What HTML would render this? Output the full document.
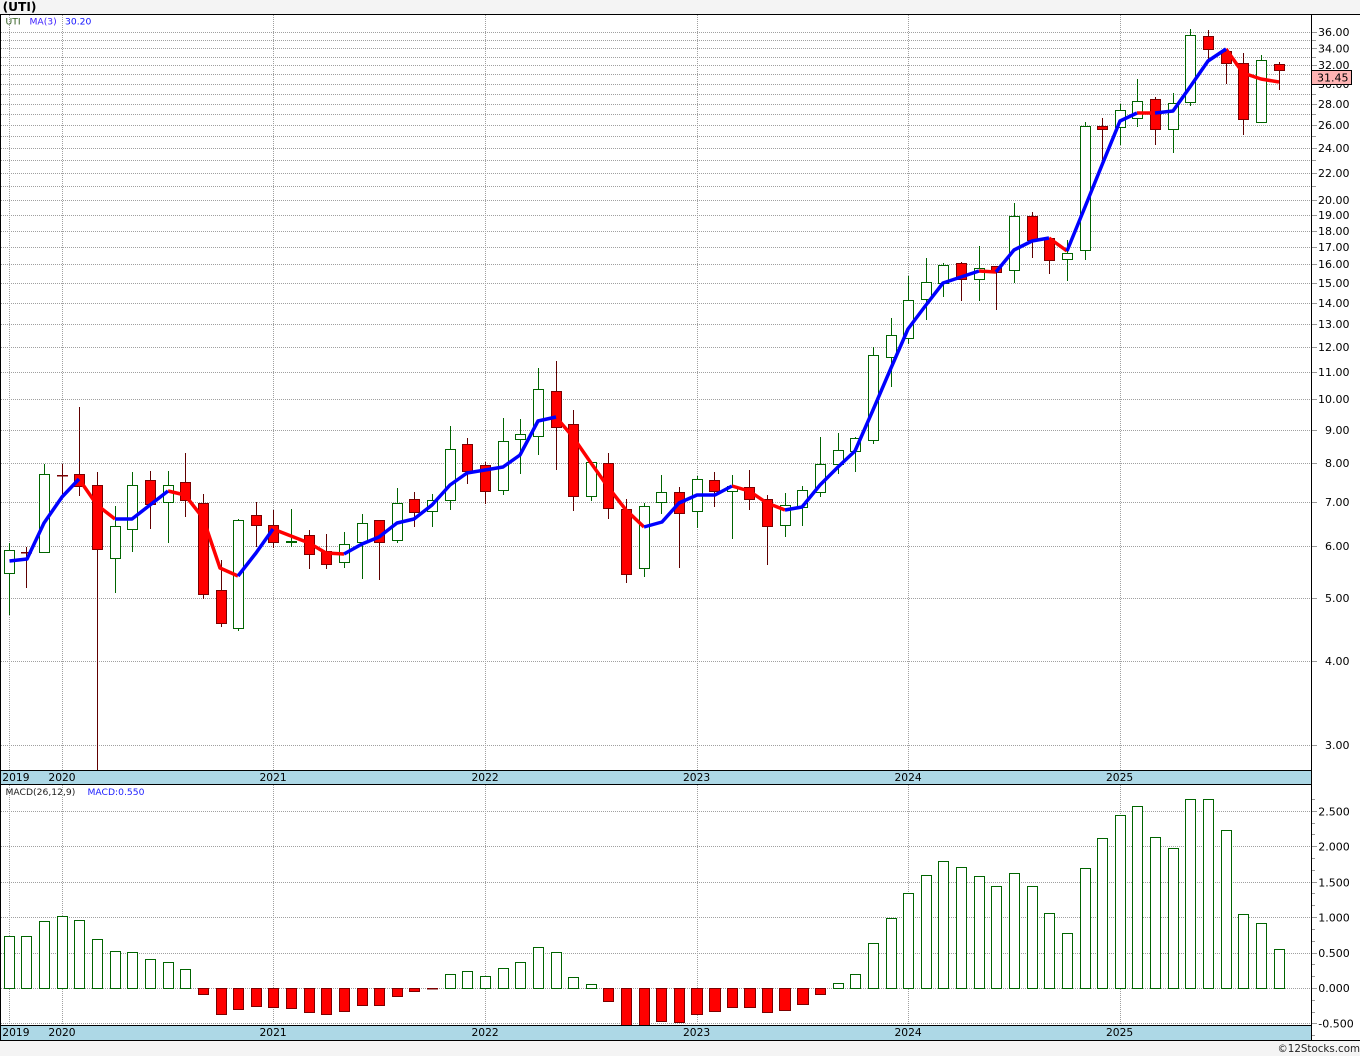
<!DOCTYPE html>
<html><head><meta charset="utf-8"><title>(UTI)</title>
<style>
html,body{margin:0;padding:0;background:#f4f4f4;width:1360px;height:1056px;overflow:hidden}
svg{position:absolute;left:0;top:0;display:block}
text{font-family:"DejaVu Sans","Liberation Sans",sans-serif;fill:#000}
.ax text{font-size:11px}
.d text{font-size:10.7px}
.leg{font-size:9.2px}
</style></head><body>
<svg width="1360" height="1056" viewBox="0 0 1360 1056" xmlns="http://www.w3.org/2000/svg">
<rect x="0" y="0" width="1360" height="1056" fill="#f4f4f4"/>
<rect x="0" y="14" width="1360" height="1026" fill="#fff"/>
<text x="2.6" y="11" style="font-size:12.2px;font-weight:bold;fill:#000">(UTI)</text>

<!-- grid -->
<g fill="none" stroke="#a0a0a0" stroke-width="1" stroke-dasharray="1 1" shape-rendering="crispEdges">
<path d="M1 32.5H1311M1 40.5H1311M1 48.5H1311M1 57.5H1311M1 65.5H1311M1 74.5H1311M1 84.5H1311M1 94.5H1311M1 104.5H1311M1 114.5H1311M1 125.5H1311M1 136.5H1311M1 148.5H1311M1 160.5H1311M1 173.5H1311M1 186.5H1311M1 200.5H1311M1 215.5H1311M1 231.5H1311M1 247.5H1311M1 264.5H1311M1 283.5H1311M1 303.5H1311M1 324.5H1311M1 347.5H1311M1 372.5H1311M1 399.5H1311M1 430.5H1311M1 463.5H1311M1 502.5H1311M1 546.5H1311M1 598.5H1311M1 661.5H1311M1 745.5H1311"/>
<path d="M1 811.5H1311M1 846.5H1311M1 882.5H1311M1 917.5H1311M1 953.5H1311M1 988.5H1311M1 1023.5H1311"/>
<path d="M9.5 15V770M62.5 15V770M273.5 15V770M485.5 15V770M697.5 15V770M908.5 15V770M1120.5 15V770"/>
<path d="M9.5 785V1025M62.5 785V1025M273.5 785V1025M485.5 785V1025M697.5 785V1025M908.5 785V1025M1120.5 785V1025"/>
</g>

<!-- wicks -->
<path fill="none" stroke="#006400" stroke-width="1" shape-rendering="crispEdges" d="M9.5 543V615M44.5 464V552M115.5 506V593M132.5 472V552M168.5 471V543M238.5 519V631M291.5 509V547M344.5 532V568M362.5 514V579M397.5 488V543M432.5 494V527M450.5 426V510M503.5 418V495M520.5 419V474M538.5 368V455M591.5 462V501M644.5 503V577M661.5 475V514M697.5 476V528M732.5 475V539M785.5 493V537M802.5 486V526M820.5 437V497M838.5 433V474M855.5 437V472M873.5 347V444M891.5 318V387M908.5 276V344M926.5 258V320M943.5 263V297M979.5 246V301M1014.5 203V283M1067.5 240V281M1085.5 122V260M1120.5 104V145M1137.5 79V127M1173.5 93V153M1190.5 29V106M1261.5 55V122"/>
<path fill="none" stroke="#600000" stroke-width="1" shape-rendering="crispEdges" d="M26.5 547V588M62.5 464V498M79.5 407V496M97.5 472V770M150.5 471V529M185.5 453V517M203.5 494V599M221.5 560V627M256.5 502V547M273.5 510V548M309.5 530V569M326.5 534V569M379.5 520V580M414.5 492V527M467.5 438V484M485.5 462V504M556.5 361V470M573.5 410V511M608.5 453V519M626.5 499V583M679.5 487V568M714.5 472V507M749.5 470V510M767.5 495V565M961.5 262V301M996.5 266V310M1032.5 212V258M1049.5 238V274M1102.5 118V165M1155.5 97V145M1208.5 30V62M1226.5 51V84M1243.5 53V135M1279.5 62V90"/>

<!-- bodies -->
<path fill="#fff" stroke="#006400" stroke-width="1" shape-rendering="crispEdges" d="M4.5 550.5h10V573.5h-10zM39.5 474.5h10V552.5h-10zM110.5 526.5h10V558.5h-10zM127.5 485.5h10V529.5h-10zM163.5 485.5h10V502.5h-10zM233.5 520.5h10V628.5h-10zM286.5 541.5h10v1h-10zM339.5 544.5h10V562.5h-10zM357.5 523.5h10V542.5h-10zM392.5 503.5h10V540.5h-10zM427.5 500.5h10V511.5h-10zM445.5 449.5h10V500.5h-10zM498.5 441.5h10V490.5h-10zM515.5 434.5h10V439.5h-10zM533.5 389.5h10V436.5h-10zM586.5 462.5h10V496.5h-10zM639.5 506.5h10V568.5h-10zM656.5 492.5h10V502.5h-10zM692.5 479.5h10V511.5h-10zM727.5 486.5h10V491.5h-10zM780.5 505.5h10V525.5h-10zM797.5 490.5h10V507.5h-10zM815.5 464.5h10V492.5h-10zM833.5 450.5h10V464.5h-10zM850.5 438.5h10V451.5h-10zM868.5 355.5h10V440.5h-10zM886.5 335.5h10V357.5h-10zM903.5 300.5h10V338.5h-10zM921.5 282.5h10V299.5h-10zM938.5 265.5h10V283.5h-10zM974.5 268.5h10V279.5h-10zM1009.5 216.5h10V270.5h-10zM1062.5 253.5h10V259.5h-10zM1080.5 126.5h10V250.5h-10zM1115.5 110.5h10V127.5h-10zM1132.5 101.5h10V118.5h-10zM1168.5 103.5h10V129.5h-10zM1185.5 35.5h10V102.5h-10zM1256.5 60.5h10V122.5h-10z"/>
<path fill="#f00" stroke="#7a0000" stroke-width="1" shape-rendering="crispEdges" d="M21.5 552.5h10v.5h-10zM57.5 475.5h10v.5h-10zM74.5 474.5h10V486.5h-10zM92.5 485.5h10V549.5h-10zM145.5 480.5h10V504.5h-10zM180.5 482.5h10V500.5h-10zM198.5 503.5h10V594.5h-10zM216.5 590.5h10V623.5h-10zM251.5 515.5h10V525.5h-10zM268.5 525.5h10V542.5h-10zM304.5 535.5h10V554.5h-10zM321.5 551.5h10V564.5h-10zM374.5 520.5h10V542.5h-10zM409.5 499.5h10V512.5h-10zM462.5 444.5h10V471.5h-10zM480.5 465.5h10V491.5h-10zM551.5 391.5h10V427.5h-10zM568.5 424.5h10V496.5h-10zM603.5 463.5h10V508.5h-10zM621.5 509.5h10V574.5h-10zM674.5 492.5h10V513.5h-10zM709.5 480.5h10V491.5h-10zM744.5 487.5h10V499.5h-10zM762.5 499.5h10V526.5h-10zM956.5 263.5h10V279.5h-10zM991.5 266.5h10V272.5h-10zM1027.5 216.5h10V240.5h-10zM1044.5 238.5h10V260.5h-10zM1097.5 126.5h10V129.5h-10zM1150.5 99.5h10V129.5h-10zM1203.5 36.5h10V49.5h-10zM1221.5 51.5h10V63.5h-10zM1238.5 63.5h10V119.5h-10zM1274.5 64.5h10V70.5h-10z"/>

<!-- MA line -->
<g fill="none" stroke-width="3.5" stroke-linejoin="round" stroke-linecap="butt">
<g stroke="#f00">
<polyline points="79,479 97,505 115,519"/>
<polyline points="168,491 185,495 203,518 220,568 238,576"/>
<polyline points="273,529 291,536 309,543 326,553 344,554"/>
<polyline points="556,417 573,437 591,463 608,487 626,510 644,527"/>
<polyline points="732,486 749,491 767,503 785,510"/>
<polyline points="979,271 996,272"/>
<polyline points="1049,238 1067,251"/>
<polyline points="1137,113 1155,113"/>
<polyline points="1226,49 1243,73 1261,79 1279,82"/>
</g>
<g stroke="#00f">
<polyline points="9.5,561 27,559 44,523 62,497 79,479"/>
<polyline points="115,519 132,519 150,505 168,491"/>
<polyline points="238,576 256,553 273,529"/>
<polyline points="344,554 362,544 379,537 397,523 414,519 432,505 450,485 467,473 485,470 503,467 520,455 538,421 556,417"/>
<polyline points="644,527 662,522 679,503 697,495 715,495 732,486"/>
<polyline points="785,510 802,507 820,485 838,467 855,451 873,410 891,368 908,329 926,305 943,283 961,277 979,271"/>
<polyline points="996,272 1014,250 1032,241 1049,238"/>
<polyline points="1067,251 1085,207 1102,165 1120,121 1137,113"/>
<polyline points="1155,113 1173,111 1190,87 1208,61 1226,49"/>
</g>
</g>

<!-- MACD -->
<path fill="#fff" stroke="#006400" stroke-width="1" shape-rendering="crispEdges" d="M4.5 936.5h10V988.5h-10zM21.5 936.5h10V988.5h-10zM39.5 921.5h10V988.5h-10zM57.5 916.5h10V988.5h-10zM74.5 920.5h10V988.5h-10zM92.5 939.5h10V988.5h-10zM110.5 951.5h10V988.5h-10zM127.5 952.5h10V988.5h-10zM145.5 959.5h10V988.5h-10zM163.5 962.5h10V988.5h-10zM180.5 969.5h10V988.5h-10zM445.5 974.5h10V988.5h-10zM462.5 971.5h10V988.5h-10zM480.5 976.5h10V988.5h-10zM498.5 968.5h10V988.5h-10zM515.5 962.5h10V988.5h-10zM533.5 947.5h10V988.5h-10zM551.5 952.5h10V988.5h-10zM568.5 977.5h10V988.5h-10zM586.5 984.5h10V988.5h-10zM833.5 983.5h10V988.5h-10zM850.5 974.5h10V988.5h-10zM868.5 943.5h10V988.5h-10zM886.5 918.5h10V988.5h-10zM903.5 893.5h10V988.5h-10zM921.5 875.5h10V988.5h-10zM938.5 861.5h10V988.5h-10zM956.5 867.5h10V988.5h-10zM974.5 876.5h10V988.5h-10zM991.5 886.5h10V988.5h-10zM1009.5 873.5h10V988.5h-10zM1027.5 886.5h10V988.5h-10zM1044.5 913.5h10V988.5h-10zM1062.5 933.5h10V988.5h-10zM1080.5 868.5h10V988.5h-10zM1097.5 838.5h10V988.5h-10zM1115.5 815.5h10V988.5h-10zM1132.5 806.5h10V988.5h-10zM1150.5 837.5h10V988.5h-10zM1168.5 848.5h10V988.5h-10zM1185.5 799.5h10V988.5h-10zM1203.5 799.5h10V988.5h-10zM1221.5 830.5h10V988.5h-10zM1238.5 914.5h10V988.5h-10zM1256.5 923.5h10V988.5h-10zM1274.5 949.5h10V988.5h-10z"/>
<path fill="#f00" stroke="#7a0000" stroke-width="1" shape-rendering="crispEdges" d="M198.5 988.5h10V994.5h-10zM216.5 988.5h10V1014.5h-10zM233.5 988.5h10V1009.5h-10zM251.5 988.5h10V1006.5h-10zM268.5 988.5h10V1007.5h-10zM286.5 988.5h10V1008.5h-10zM304.5 988.5h10V1012.5h-10zM321.5 988.5h10V1014.5h-10zM339.5 988.5h10V1011.5h-10zM357.5 988.5h10V1005.5h-10zM374.5 988.5h10V1005.5h-10zM392.5 988.5h10V996.5h-10zM409.5 988.5h10V991.5h-10zM427.5 988.5h10V989h-10zM603.5 988.5h10V1001.5h-10zM621.5 988.5h10V1026h-10zM639.5 988.5h10V1026h-10zM656.5 988.5h10V1021.5h-10zM674.5 988.5h10V1022.5h-10zM691.5 988.5h11V1014.5h-11zM709.5 988.5h11V1011.5h-11zM727.5 988.5h10V1007.5h-10zM744.5 988.5h11V1007.5h-11zM762.5 988.5h10V1012.5h-10zM779.5 988.5h11V1010.5h-11zM797.5 988.5h11V1004.5h-11zM815.5 988.5h10V994.5h-10z"/>

<!-- date bands -->
<rect x="0" y="770" width="1311" height="15" fill="#add8e6"/>
<rect x="0" y="1025" width="1311" height="15" fill="#add8e6"/>
<g fill="#000" shape-rendering="crispEdges">
<rect x="0" y="14" width="1360" height="1"/>
<rect x="0" y="15" width="1" height="1025"/>
<rect x="0" y="770" width="1311" height="1"/>
<rect x="0" y="784" width="1311" height="1"/>
<rect x="0" y="1025" width="1311" height="1"/>
<rect x="0" y="1040" width="1360" height="1"/>
<rect x="1311" y="14" width="1" height="1026"/>
</g>

<!-- ticks -->
<g fill="none" stroke="#999" stroke-width="1" shape-rendering="crispEdges">
<path d="M1312 32.5h5M1312 40.5h4M1312 48.5h5M1312 57.5h4M1312 65.5h5M1312 74.5h4M1312 84.5h5M1312 94.5h4M1312 104.5h5M1312 114.5h4M1312 125.5h5M1312 136.5h4M1312 148.5h5M1312 160.5h4M1312 173.5h5M1312 186.5h4M1312 200.5h5M1312 215.5h5M1312 231.5h5M1312 247.5h5M1312 264.5h5M1312 283.5h5M1312 303.5h5M1312 324.5h5M1312 347.5h5M1312 372.5h5M1312 399.5h5M1312 430.5h5M1312 463.5h5M1312 502.5h5M1312 546.5h5M1312 598.5h5M1312 661.5h5M1312 745.5h5"/>
<path d="M1312 799.5h3M1312 811.5h5M1312 823.5h3M1312 834.5h3M1312 846.5h5M1312 858.5h3M1312 870.5h3M1312 882.5h5M1312 893.5h3M1312 905.5h3M1312 917.5h5M1312 929.5h3M1312 941.5h3M1312 953.5h5M1312 964.5h3M1312 976.5h3M1312 988.5h5M1312 1000.5h3M1312 1012.5h3M1312 1023.5h5M1312 1035.5h3"/>
</g>

<!-- labels -->
<g class="leg">
<text class="leg" x="5.5" y="24.5" style="fill:#2e5a1c">UTI</text>
<text class="leg" x="29.5" y="24.5" style="fill:#3a1cff">MA(3)</text>
<text class="leg" x="65" y="24.5" style="fill:#1010ff">30.20</text>
<text class="leg" x="5.5" y="795" style="fill:#222">MACD(26,12,9)</text>
<text class="leg" x="87.5" y="795" style="fill:#2020ff">MACD:0.550</text>
</g>
<g class="d">
<text x="2.3" y="781">2019</text>
<text x="48.4" y="781">2020</text>
<text x="259.5" y="781">2021</text>
<text x="471.5" y="781">2022</text>
<text x="683" y="781">2023</text>
<text x="894.5" y="781">2024</text>
<text x="1106" y="781">2025</text>
<text x="2.3" y="1036">2019</text>
<text x="48.4" y="1036">2020</text>
<text x="259.5" y="1036">2021</text>
<text x="471.5" y="1036">2022</text>
<text x="683" y="1036">2023</text>
<text x="894.5" y="1036">2024</text>
<text x="1106" y="1036">2025</text>
</g>
<g class="ax">
<text x="1318" y="36">36.00</text>
<text x="1318" y="52.5">34.00</text>
<text x="1318" y="69">32.00</text>
<text x="1318" y="88">30.00</text>
<text x="1318" y="108">28.00</text>
<text x="1318" y="129">26.00</text>
<text x="1318" y="152">24.00</text>
<text x="1318" y="177">22.00</text>
<text x="1318" y="204">20.00</text>
<text x="1318" y="219">19.00</text>
<text x="1318" y="235">18.00</text>
<text x="1318" y="251">17.00</text>
<text x="1318" y="268">16.00</text>
<text x="1318" y="287">15.00</text>
<text x="1318" y="307">14.00</text>
<text x="1318" y="328">13.00</text>
<text x="1318" y="351">12.00</text>
<text x="1318" y="376">11.00</text>
<text x="1318" y="403">10.00</text>
<text x="1325" y="434">9.00</text>
<text x="1325" y="467">8.00</text>
<text x="1325" y="506">7.00</text>
<text x="1325" y="550">6.00</text>
<text x="1325" y="602">5.00</text>
<text x="1325" y="665">4.00</text>
<text x="1325" y="749">3.00</text>
<text x="1318.3" y="815.5">2.500</text>
<text x="1318.3" y="850.5">2.000</text>
<text x="1318.3" y="886.5">1.500</text>
<text x="1318.3" y="921.5">1.000</text>
<text x="1318.3" y="957">0.500</text>
<text x="1318.3" y="992">0.000</text>
<text x="1318.3" y="1027.5">-0.500</text>
</g>
<rect x="1311.5" y="70.5" width="40" height="14" fill="#ffb4b4" stroke="#000" stroke-width="1" shape-rendering="crispEdges"/>
<text x="1317" y="81.5" style="font-size:11px">31.45</text>
<text x="1277.5" y="1052" style="font-size:10.3px;fill:#222">©12Stocks.com</text>
</svg>
</body></html>
